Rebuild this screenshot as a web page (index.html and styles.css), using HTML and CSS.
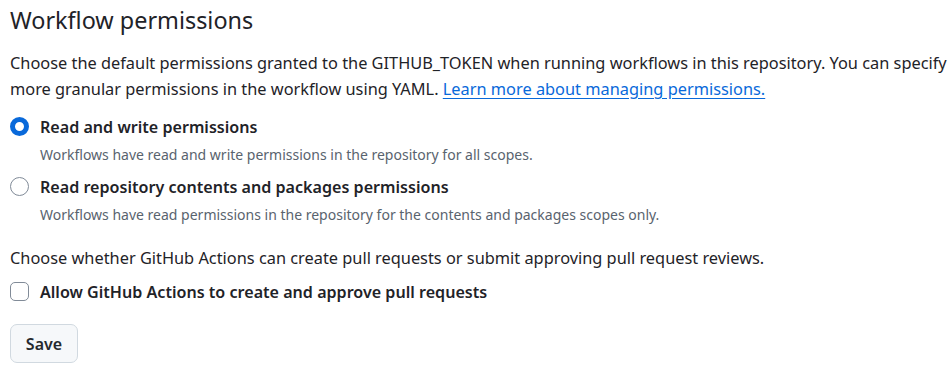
FILE: index.html
```html
<!DOCTYPE html>
<html lang="en">
<head>
  <meta charset="utf-8">
  <title>Workflow permissions</title>
  <link rel="stylesheet" href="styles.css">
</head>
<body>
  <div class="settings">
    <h2 class="settings-title">Workflow permissions</h2>
    <p class="settings-note">
      Choose the default permissions granted to the GITHUB_TOKEN when running workflows in this repository. You can specify
      more granular permissions in the workflow using YAML. <a href="#" class="link">Learn more about managing permissions.</a>
    </p>

    <div class="choice-list">
      <label class="choice">
        <input type="radio" name="perm" class="radio" checked>
        <span class="choice-body">
          <span class="choice-label">Read and write permissions</span>
          <span class="choice-hint">Workflows have read and write permissions in the repository for all scopes.</span>
        </span>
      </label>
      <label class="choice">
        <input type="radio" name="perm" class="radio">
        <span class="choice-body">
          <span class="choice-label">Read repository contents and packages permissions</span>
          <span class="choice-hint">Workflows have read permissions in the repository for the contents and packages scopes only.</span>
        </span>
      </label>
    </div>

    <p class="settings-note settings-note-gap">Choose whether GitHub Actions can create pull requests or submit approving pull request reviews.</p>

    <label class="choice choice-check">
      <input type="checkbox" class="checkbox">
      <span class="choice-label">Allow GitHub Actions to create and approve pull requests</span>
    </label>

    <button type="button" class="btn">Save</button>
  </div>
</body>
</html>
```

FILE: styles.css
```css
body {
  margin: 0;
  background: #fff;
  color: #1f2328;
  font-family: "Noto Sans", "Liberation Sans", sans-serif;
}
.settings {
  width: 942px;
  padding: 6px 0 0 10px;
}
.settings-title {
  margin: 0;
  font-size: 23.4px;
  font-weight: 400;
  line-height: 29px;
}
.settings-note {
  margin: 15px 0 0;
  font-size: 16.35px;
  line-height: 26px;
}
.settings-note-gap {
  margin-top: 20px;
}
.link {
  color: #0969da;
  text-decoration: underline;
  text-underline-offset: 3px;
}
.choice-list {
  margin-top: 13px;
  display: flex;
  flex-direction: column;
  gap: 10px;
}
.choice {
  display: flex;
  align-items: flex-start;
  gap: 11px;
}
.choice-body {
  display: flex;
  flex-direction: column;
  gap: 6px;
}
.choice-label {
  font-size: 16.1px;
  font-weight: 600;
  line-height: 24px;
}
.choice-hint {
  font-size: 14px;
  line-height: 20px;
  color: #59636e;
}
.radio,
.checkbox {
  appearance: none;
  margin: 2px 0 0;
  width: 19px;
  height: 19px;
  flex-shrink: 0;
  border: 1px solid #818b98;
  background: #fff;
}
.radio {
  border-radius: 50%;
}
.radio:checked {
  border: 5px solid #0969da;
}
.checkbox {
  border-radius: 5px;
}
.choice-check {
  margin-top: 9px;
}
.btn {
  display: block;
  margin-top: 20px;
  width: 68px;
  height: 39px;
  padding: 0;
  border: 1px solid #d1d9e0;
  border-radius: 7px;
  background: #f6f8fa;
  color: #25292e;
  font-family: inherit;
  font-size: 16px;
  font-weight: 600;
}
```
